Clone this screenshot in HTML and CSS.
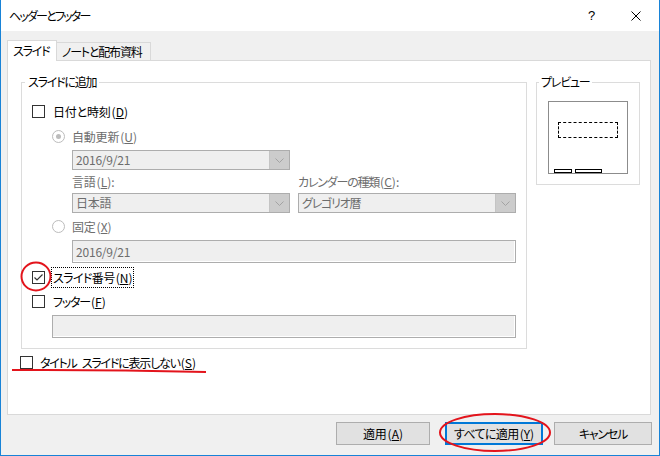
FILE: index.html
```html
<!DOCTYPE html>
<html lang="ja">
<head>
<meta charset="utf-8">
<title>ヘッダーとフッター</title>
<link rel="stylesheet" href="styles.css">
</head>
<body>
<div class="window">
  <div class="titlebar">
    <span class="title kana">ヘッダーとフッター</span>
    <span class="help">?</span>
    <span class="close"><svg width="10" height="10" viewBox="0 0 10 10"><path d="M0.5 0.5 L9.5 9.5 M9.5 0.5 L0.5 9.5" stroke="#000" stroke-width="1" fill="none"/></svg></span>
  </div>
  <div class="client">
    <div class="tabs">
      <div class="tab active kana">スライド</div>
      <div class="tab inactive kana">ノートと配布資料</div>
    </div>
    <div class="panel">
      <div class="panel-row">
        <div class="group main">
          <div class="group-title kana">スライドに追加</div>
          <div class="row check row-date"><span class="box"></span><span>日付と時刻<span class="mn">(<u>D</u>)</span></span></div>
          <div class="row radio-row row-auto"><span class="radio on"></span><span class="dis">自動更新<span class="mn">(<u>U</u>)</span></span></div>
          <div class="combo combo-date"><span class="combo-text">2016/9/21</span><span class="combo-btn"><svg width="9" height="5" viewBox="0 0 9 5"><path d="M0.5 0.5 L4.5 4.5 L8.5 0.5" stroke="#a3a3a3" fill="none"/></svg></span></div>
          <div class="pair labels">
            <span class="dis">言語<span class="mn">(<u>L</u>):</span></span>
            <span class="dis kana">カレンダーの種類<span class="mn">(<u>C</u>):</span></span>
          </div>
          <div class="pair combos">
            <div class="combo"><span class="combo-text">日本語</span><span class="combo-btn"><svg width="9" height="5" viewBox="0 0 9 5"><path d="M0.5 0.5 L4.5 4.5 L8.5 0.5" stroke="#a3a3a3" fill="none"/></svg></span></div>
            <div class="combo"><span class="combo-text kana">グレゴリオ暦</span><span class="combo-btn"><svg width="9" height="5" viewBox="0 0 9 5"><path d="M0.5 0.5 L4.5 4.5 L8.5 0.5" stroke="#a3a3a3" fill="none"/></svg></span></div>
          </div>
          <div class="row radio-row row-fixed"><span class="radio"></span><span class="dis">固定<span class="mn">(<u>X</u>)</span></span></div>
          <div class="textbox tb-fixed"><span class="combo-text">2016/9/21</span></div>
          <div class="row check row-num"><span class="box checked"><svg width="11" height="11" viewBox="0 0 11 11"><path d="M1.5 5.5 L4 8 L9.5 2.5" stroke="#333" stroke-width="1.2" fill="none"/></svg></span><span class="focus semi">スライド番号<span class="mn">(<u>N</u>)</span></span></div>
          <div class="row check row-footer"><span class="box"></span><span class="kana">フッター<span class="mn">(<u>F</u>)</span></span></div>
          <div class="textbox tb-footer"></div>
        </div>
        <div class="group preview">
          <div class="group-title kana">プレビュー</div>
          <div class="slide">
            <div class="dashed"></div>
            <div class="slide-foot"><span class="mini m1"></span><span class="mini m2"></span></div>
          </div>
        </div>
      </div>
      <div class="row check row-title"><span class="box"></span><span class="kana">タイトル<span class="gap"> </span>スライドに表示しない<span class="mn">(<u>S</u>)</span></span></div>
    </div>
    <div class="buttons">
      <div class="btn b1">適用<span class="mn">(<u>A</u>)</span></div>
      <div class="btn b2 default semi">すべてに適用<span class="mn">(<u>Y</u>)</span></div>
      <div class="btn b3 kana">キャンセル</div>
    </div>
  </div>
  <svg class="marks" width="660" height="456" viewBox="0 0 660 456">
    <ellipse cx="36" cy="276.5" rx="14.5" ry="14" stroke="#e3141c" stroke-width="2" fill="none"/>
    <path d="M12 370 Q110 369.5 206 372" stroke="#e3141c" stroke-width="2" fill="none"/>
    <ellipse cx="495" cy="432.5" rx="55" ry="18.5" stroke="#e3141c" stroke-width="2" fill="none"/>
  </svg>
</div>
</body>
</html>
```

FILE: styles.css
```css
body {
  margin: 0;
  font-family: "Noto Sans CJK JP", "Noto Sans", sans-serif;
  font-size: 12px;
  font-feature-settings: "palt";
  color: #000;
  letter-spacing: -0.2px;
}
u { text-decoration: underline; text-underline-offset: 1px; }
.kana { letter-spacing: -1.2px; }
.semi { letter-spacing: -0.6px; }
.mn { letter-spacing: 0; margin-left: 1px; }
.gap { display: inline-block; width: 5px; }

.window {
  position: relative;
  width: 660px;
  height: 456px;
  box-sizing: border-box;
  border: 1px solid #1883d7;
  border-top: none;
  background: #f0f0f0;
  display: flex;
  flex-direction: column;
}

.titlebar {
  height: 31px;
  flex-shrink: 0;
  background: #fff;
  display: flex;
  align-items: center;
  padding-left: 8px;
}
.title { flex: 1; line-height: 16px; letter-spacing: -1.8px; }
.help {
  width: 46px;
  box-sizing: border-box;
  padding-left: 3px;
  text-align: center;
  font-family: "Liberation Sans", sans-serif;
  font-size: 13px;
  line-height: 16px;
}
.close {
  width: 46px;
  display: flex;
  justify-content: center;
  align-items: center;
}

.client {
  flex: 1;
  padding: 9px 8px 0 6px;
}

.tabs {
  display: flex;
  align-items: flex-start;
  height: 21px;
  margin-bottom: -1px;
}
.tab {
  box-sizing: border-box;
  border: 1px solid #d9d9d9;
  border-bottom: none;
  display: flex;
  align-items: center;
  padding-left: 5px;
  line-height: 16px;
  white-space: nowrap;
}
.tab.active {
  width: 50px;
  height: 21px;
  background: #fff;
  position: relative;
  z-index: 2;
}
.tab.inactive {
  width: 95px;
  height: 19px;
  margin-left: -1px;
  margin-top: 2px;
  background: #f0f0f0;
}

.panel {
  position: relative;
  z-index: 1;
  width: 644px;
  height: 355px;
  box-sizing: border-box;
  border: 1px solid #d9d9d9;
  background: #fff;
  padding: 21px 0 0 13px;
}

.panel-row {
  display: flex;
  align-items: flex-start;
}
.group {
  box-sizing: border-box;
  border: 1px solid #dcdcdc;
}
.group.main { width: 506px; height: 267px; }
.group.preview { width: 104px; height: 103px; margin-left: 9px; }
.group-title {
  width: fit-content;
  margin-top: -9px;
  line-height: 16px;
  height: 16px;
  padding: 0 3px;
  background: #fff;
  margin-left: 3px;
  white-space: nowrap;
}
.preview .group-title { margin-left: 2px; padding: 0 2px; }

.row {
  display: flex;
  align-items: center;
  height: 17px;
  line-height: 16px;
  white-space: nowrap;
}
.check { margin-left: 10px; }
.radio-row { margin-left: 30px; }
.row-date { margin-top: 13px; }
.row-auto { margin-top: 8px; }
.row-fixed { margin-top: 5px; }
.row-num { margin-top: 6px; }
.row-footer { margin-top: 7px; }
.row-title { margin-top: 5px; margin-left: -1px; }
.row-title .box { margin-right: 7px; }

.box {
  width: 13px;
  height: 13px;
  box-sizing: border-box;
  border: 1px solid #333;
  background: #fff;
  margin-right: 8px;
  flex-shrink: 0;
  display: flex;
  align-items: center;
  justify-content: center;
}
.radio {
  width: 13px;
  height: 13px;
  box-sizing: border-box;
  border: 1px solid #bcbcbc;
  border-radius: 50%;
  background: #fff;
  margin-right: 7px;
  flex-shrink: 0;
  display: flex;
  align-items: center;
  justify-content: center;
}
.radio.on::after {
  content: "";
  width: 5px;
  height: 5px;
  border-radius: 50%;
  background: #bcbcbc;
}
.dis { color: #6d6d6d; }

.focus {
  margin-left: -2px;
  padding: 0 1px;
  height: 21px;
  box-sizing: border-box;
  border: 1px dotted #000;
  display: flex;
  align-items: center;
}

.combo {
  width: 218px;
  height: 20px;
  box-sizing: border-box;
  border: 1px solid #adadad;
  background: #efefef;
  display: flex;
  align-items: stretch;
}
.combo-text {
  flex: 1;
  padding-left: 3px;
  color: #6d6d6d;
  line-height: 18px;
}
.combo-btn {
  width: 19px;
  background: #cccccc;
  border-left: 1px solid #c4c4c4;
  display: flex;
  align-items: center;
  justify-content: center;
}
.combo-date { margin-top: 5px; margin-left: 50px; }

.pair {
  display: grid;
  grid-template-columns: 218px 218px;
  column-gap: 8px;
  margin-left: 50px;
}
.labels { margin-top: 4px; height: 16px; line-height: 16px; white-space: nowrap; }
.combos { margin-top: 3px; }

.textbox {
  height: 23px;
  box-sizing: border-box;
  border: 1px solid #adadad;
  background: #efefef;
  box-shadow: inset -1px -1px 0 #fff;
  display: flex;
  align-items: center;
}
.tb-fixed { margin-top: 5px; margin-left: 50px; width: 444px; }
.tb-footer { margin-top: 5px; margin-left: 30px; width: 464px; }

.slide {
  width: 80px;
  height: 73px;
  box-sizing: border-box;
  border: 1px solid #8c8c8c;
  margin: 11px 0 0 11px;
  display: flex;
  flex-direction: column;
}
.dashed {
  width: 60px;
  height: 16px;
  box-sizing: border-box;
  border: 1px dashed #000;
  margin: 20px 0 0 9px;
}
.slide-foot {
  margin-top: auto;
  display: flex;
  gap: 3px;
  padding-left: 5px;
}
.mini {
  height: 4px;
  box-sizing: border-box;
  border: 1px solid #000;
}
.m1 { width: 18px; }
.m2 { width: 27px; }

.buttons {
  display: flex;
  justify-content: flex-end;
  margin-top: 7px;
  margin-right: -1px;
}
.btn {
  height: 23px;
  box-sizing: border-box;
  border: 1px solid #adadad;
  background: #e1e1e1;
  display: flex;
  align-items: center;
  justify-content: center;
  line-height: 16px;
  white-space: nowrap;
}
.b1 { width: 94px; }
.b2 { width: 98px; margin-left: 15px; }
.b3 { width: 98px; margin-left: 11px; }
.btn.default { border: 2px solid #0078d7; }

.marks {
  position: absolute;
  z-index: 5;
  left: -1px;
  top: 0;
  pointer-events: none;
}
```
